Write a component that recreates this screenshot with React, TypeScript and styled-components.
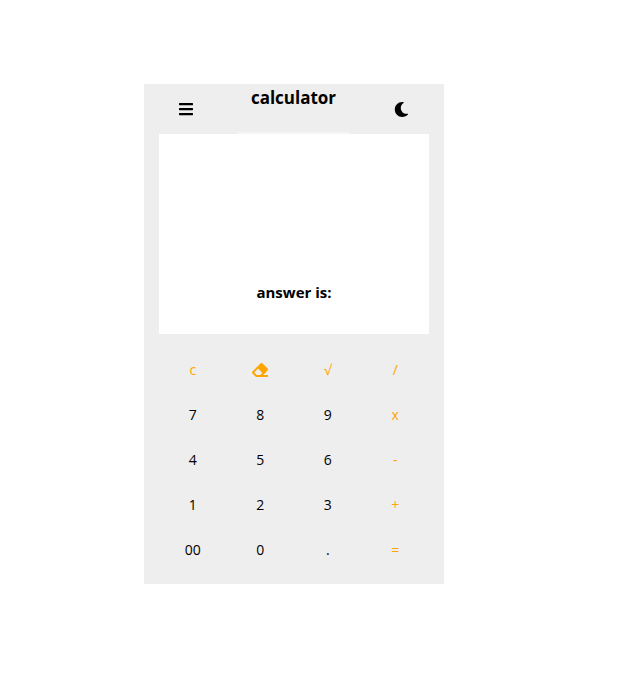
import React from "react";
import styled, { createGlobalStyle } from "styled-components";
import { FaBars, FaEraser, FaMoon } from "react-icons/fa";

const GlobalStyle = createGlobalStyle`
  * {
    box-sizing: border-box;
  }
  body {
    margin: 0;
    background: #fff;
    color: #000;
    font-family: "Open Sans", "Noto Sans", sans-serif;
  }
`;

const Page = styled.main`
  min-height: 100vh;
  display: flex;
  justify-content: center;
  align-items: center;
  padding: 0 33px 7px 0;
`;

const Card = styled.section`
  width: 100%;
  max-width: 300px;
  padding-bottom: 12px;
  background: #eee;
`;

const Header = styled.header`
  height: 50px;
  padding: 0 35px 0 34px;
  display: flex;
  justify-content: space-between;
  align-items: center;
`;

const IconButton = styled.button`
  display: flex;
  justify-content: center;
  align-items: center;
  width: 16px;
  padding: 0;
  border: 0;
  background: none;
  color: inherit;
  cursor: pointer;
`;

const Title = styled.h1`
  align-self: stretch;
  width: 113px;
  margin: 0;
  border-bottom: 2px solid #f5f5f5;
  font-size: 17px;
  font-weight: 700;
  line-height: 28px;
  text-align: center;
`;

const Display = styled.div`
  height: 200px;
  margin: 0 15px;
  padding-bottom: 32px;
  display: flex;
  justify-content: center;
  align-items: flex-end;
  background: #fff;
`;

const Answer = styled.output`
  font-size: 15px;
  font-weight: 700;
  line-height: 20px;
`;

const Keypad = styled.div`
  margin: 13px 15px 0;
  display: grid;
  grid-template-columns: repeat(4, 1fr);
  grid-auto-rows: 45px;
`;

const Key = styled.button<{ $accent: boolean }>`
  display: flex;
  justify-content: center;
  align-items: center;
  padding: 0;
  border: 0;
  background: none;
  color: ${({ $accent }) => ($accent ? "orange" : "#000")};
  font-family: inherit;
  font-size: 14px;
  line-height: 20px;
  cursor: pointer;
`;

const keys = [
  "c", "erase", "√", "/",
  "7", "8", "9", "x",
  "4", "5", "6", "-",
  "1", "2", "3", "+",
  "00", "0", ".", "=",
];

const isOperator = (key: string) => !/^[\d.]+$/.test(key);

export default function App() {
  return (
    <>
      <GlobalStyle />
      <Page>
        <Card>
          <Header>
            <IconButton type="button" aria-label="Menu">
              <FaBars size={16} />
            </IconButton>
            <Title>calculator</Title>
            <IconButton type="button" aria-label="Dark mode">
              <FaMoon size={15} />
            </IconButton>
          </Header>
          <Display>
            <Answer>answer is:</Answer>
          </Display>
          <Keypad>
            {keys.map((key) => (
              <Key
                key={key}
                type="button"
                $accent={isOperator(key)}
                aria-label={key === "erase" ? "Erase" : undefined}
              >
                {key === "erase" ? <FaEraser size={16} /> : key}
              </Key>
            ))}
          </Keypad>
        </Card>
      </Page>
    </>
  );
}
